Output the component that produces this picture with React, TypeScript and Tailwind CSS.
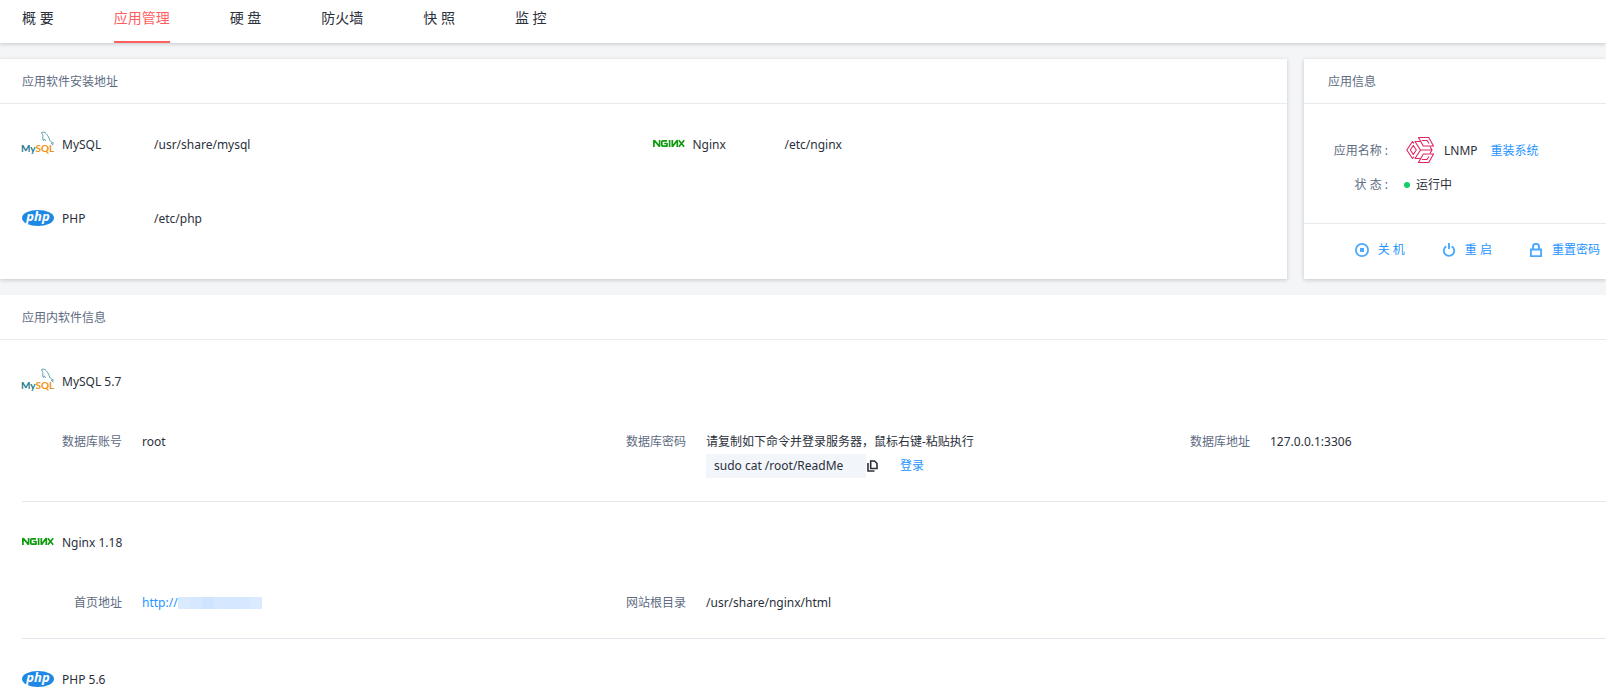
import { useState } from 'react'
import type { ReactNode } from 'react'

const tabs = ['概 要', '应用管理', '硬 盘', '防火墙', '快 照', '监 控']

function MysqlLogo() {
  return (
    <svg
      width="32"
      height="24"
      viewBox="0 2 32 24"
      className="shrink-0 overflow-visible"
      aria-hidden="true"
    >
      <g fontFamily="Lato, sans-serif" fontSize="10" fontWeight="700">
        <text x="-1" y="20.5" fill="#1f7a8c">My</text>
        <text x="13.5" y="20.5" fill="#f29111">SQL</text>
      </g>
      <path
        d="M19.5 1.500c1.600-.9 3.400-.2 4.600 1.100 2 2 3 4.500 3.700 6.800.6 1.200 2.200 1.800 3.700 2.600-1 .1-1.800.1-2.300.4.800.7 1.600 1.200 2.300 1.800M19.500 1.500c.2 1.300 1.300 2 1.400 3.200.1 1.500-.5 3.300.3 4.800.6-.2.900-.9 1.100-1.600.6.800.8 1.600 1.600 2.200"
        fill="none"
        stroke="#5f9fb0"
        strokeWidth="1"
      />
    </svg>
  )
}

function NginxLogo() {
  return (
    <svg width="32" height="24" viewBox="0 1 32 24" className="shrink-0" aria-hidden="true">
      <g fill="none" stroke="#109a10" strokeWidth="1.7" strokeLinejoin="round">
        <path d="M.9 15V8.500h.6l4.600 5.600h.5V8" />
        <path d="M14 8.800H9.800q-1 0-1 1v3.300q0 1 1 1H14v-2.600h-2.800" />
        <path d="M16.600 8v7" />
        <path d="M19.300 8v6.200h.5l4-5.500h.5V15" />
        <path d="M25.800 8.300l5.400 6.400M31.200 8.300l-5.400 6.400" />
      </g>
    </svg>
  )
}

function PhpLogo() {
  return (
    <svg width="32" height="24" viewBox="0 0 32 24" className="shrink-0" aria-hidden="true">
      <ellipse cx="16" cy="11" rx="16" ry="8" fill="#1e88e5" />
      <text
        x="16"
        y="14"
        fill="#fff"
        textAnchor="middle"
        fontFamily="'Open Sans', sans-serif"
        fontSize="13"
        fontStyle="italic"
        fontWeight="700"
      >
        php
      </text>
    </svg>
  )
}

function LnmpLogo() {
  return (
    <svg width="28" height="28" viewBox="0 1 28 28" className="shrink-0" aria-hidden="true">
      <g fill="none" stroke="#e0245e" strokeWidth="1.1" strokeLinejoin="round">
        {/* left face */}
        <path d="M8 7.500L6.500 5.500.8 14l5.700 8.500L8 20.500M7.300 9.500l3 4.500-3 4.500-3-4.500z" />
        {/* top face */}
        <path d="M12.500 1.500h10.300l4.700 8.500H17.300zM15.800 4.500h5.200l2 3" />
        {/* bottom face */}
        <path d="M12.500 26.500h10.300l4.700-8.500H17.300zM15.800 23.500h5.200l2-3" />
        {/* inner corner */}
        <path d="M14.500 5.500H9l5.500 8.500L9 22.500h5.500M14.500 14H26M24 10.500l2 3.500-2 3.500" />
      </g>
    </svg>
  )
}

function StopIcon() {
  return (
    <svg width="14" height="14" viewBox="0 0 14 14" aria-hidden="true">
      <circle cx="7" cy="7" r="6.1" fill="none" stroke="#4da9ff" strokeWidth="1.8" />
      <rect x="5" y="5" width="4" height="4" fill="#4da9ff" />
    </svg>
  )
}

function PowerIcon() {
  return (
    <svg width="14" height="14" viewBox="0 0 14 14" aria-hidden="true">
      <path
        d="M4.300 3.200a5.200 5.200 0 1 0 5.400 0M7 0v6"
        fill="none"
        stroke="#4da9ff"
        strokeWidth="1.9"
      />
    </svg>
  )
}

function LockIcon() {
  return (
    <svg width="14" height="14" viewBox="0 0 14 14" aria-hidden="true">
      <path
        d="M1.900 6.500h10.200v6.600H1.900zM4 6V3.800a3 3 0 0 1 6 0V6"
        fill="none"
        stroke="#4da9ff"
        strokeWidth="1.9"
      />
    </svg>
  )
}

function CopyIcon() {
  return (
    <svg width="11" height="12" viewBox="0 0 11 12" aria-hidden="true">
      <path
        d="M3.700 1h3.800L10 3.500V8.500H3.700zM1 3v8h6.500"
        fill="none"
        stroke="#2b303b"
        strokeWidth="1.6"
      />
    </svg>
  )
}

function CardTitle({ children }: { children: ReactNode }) {
  return (
    <h2 className="flex h-[45px] items-center border-b border-[#e8eaec] pt-0.5 text-[#5e6b82]">
      {children}
    </h2>
  )
}

function PathItem({ logo, name, path }: { logo: ReactNode; name: string; path: string }) {
  return (
    <div className="flex h-[74px] items-center">
      {logo}
      <span className="ml-2 w-[92px]">{name}</span>
      <span>{path}</span>
    </div>
  )
}

function Software({ logo, name, children }: { logo: ReactNode; name: string; children?: ReactNode }) {
  return (
    <section className="ml-[22px] border-b border-[#e4e8ee] pt-[29px] pb-[23px] last:border-b-0 last:pb-0">
      <h3 className="flex h-6 items-center gap-2">
        {logo}
        {name}
      </h3>
      {children && (
        <dl className="mt-9 grid grid-cols-[1fr_1fr_416px] pl-10 leading-6">{children}</dl>
      )}
    </section>
  )
}

function Field({ label, children }: { label: string; children: ReactNode }) {
  return (
    <div className="flex">
      <dt className="w-[60px] text-right text-[#5e6b82]">{label}</dt>
      <dd className="ml-5">{children}</dd>
    </div>
  )
}

const mask = [
  'bg-[#d9eaff]',
  'bg-[#d6e8ff]',
  'bg-[#cfe5ff]',
  'bg-[#d6e8ff]',
  'bg-[#d3e7ff]',
  'bg-[#d6e8ff]',
  'bg-[#dbebff]',
]

export default function App() {
  const [active, setActive] = useState('应用管理')
  const command = 'sudo cat /root/ReadMe'

  return (
    <div className="flex min-h-screen flex-col overflow-hidden bg-[#f3f5f7] font-['Noto_Sans','Noto_Sans_CJK_SC',sans-serif] text-xs text-[#2b303b]">
      <nav className="relative flex h-[43px] gap-[60px] bg-white pl-[22px] text-sm shadow-[0_1px_4px_rgba(0,21,41,0.2)]">
        {tabs.map((tab) => (
          <button
            key={tab}
            onClick={() => setActive(tab)}
            className={
              tab === active
                ? 'border-b-2 border-[#ff5f5f] pb-1.5 text-[#ff5f5f]'
                : 'border-b-2 border-transparent pb-1.5'
            }
          >
            {tab}
          </button>
        ))}
      </nav>

      <div className="mt-4 flex gap-[17px]">
        <section className="flex-1 bg-white shadow-[0_1px_4px_rgba(0,21,41,0.2)]">
          <div className="[&>h2]:pl-[22px]">
            <CardTitle>应用软件安装地址</CardTitle>
          </div>
          <div className="grid grid-cols-2 pt-1 pr-1 pb-[23px] pl-[22px]">
            <PathItem logo={<MysqlLogo />} name="MySQL" path="/usr/share/mysql" />
            <PathItem logo={<NginxLogo />} name="Nginx" path="/etc/nginx" />
            <PathItem logo={<PhpLogo />} name="PHP" path="/etc/php" />
          </div>
        </section>

        <section className="flex w-[302px] flex-col bg-white shadow-[0_1px_4px_rgba(0,21,41,0.2)]">
          <div className="[&>h2]:pl-6">
            <CardTitle>应用信息</CardTitle>
          </div>
          <dl className="flex-1 pt-[29px] pl-6">
            <div className="flex h-9 items-center">
              <dt className="w-[60px] text-right text-[#5e6b82]">应用名称 :</dt>
              <dd className="ml-[18px] flex items-center">
                <LnmpLogo />
                <span className="ml-2.5">LNMP</span>
                <a href="#reinstall" className="ml-[13px] text-[#1f94ff]">重装系统</a>
              </dd>
            </div>
            <div className="flex h-8 items-center">
              <dt className="w-[60px] text-right text-[#5e6b82]">状 态 :</dt>
              <dd className="ml-4 flex items-center gap-1.5">
                <span className="size-1.5 rounded-full bg-[#13ce66]" />
                运行中
              </dd>
            </div>
          </dl>
          <div className="flex h-14 items-center justify-end gap-[37px] border-t border-[#e8eaec] pr-1.5 pb-1 whitespace-nowrap text-[#1f94ff]">
            <button className="flex items-center gap-[9px]">
              <StopIcon />
              关 机
            </button>
            <button className="flex items-center gap-[9px]">
              <PowerIcon />
              重 启
            </button>
            <button className="flex items-center gap-[9px]">
              <LockIcon />
              重置密码
            </button>
          </div>
        </section>
      </div>

      <section className="mt-4 flex-1 bg-white">
        <div className="pb-px [&>h2]:pl-[22px]">
          <CardTitle>应用内软件信息</CardTitle>
        </div>
        <Software logo={<MysqlLogo />} name="MySQL 5.7">
          <Field label="数据库账号">root</Field>
          <Field label="数据库密码">
            <p>请复制如下命令并登录服务器，鼠标右键-粘贴执行</p>
            <div className="flex items-center">
              <code className="w-40 bg-[#f2f5fa] px-2 font-['Noto_Sans','Noto_Sans_CJK_SC',sans-serif]">
                {command}
              </code>
              <button
                aria-label="复制"
                className="ml-px"
                onClick={() => navigator.clipboard.writeText(command)}
              >
                <CopyIcon />
              </button>
              <a href="#login" className="ml-[22px] text-[#1f94ff]">登录</a>
            </div>
          </Field>
          <Field label="数据库地址">127.0.0.1:3306</Field>
        </Software>
        <Software logo={<NginxLogo />} name="Nginx 1.18">
          <Field label="首页地址">
            <a href="#home" className="flex items-center text-[#1f94ff]">
              http://
              <span className="flex">
                {mask.map((color, i) => (
                  <span key={i} className={`h-3 w-3 ${color}`} />
                ))}
              </span>
            </a>
          </Field>
          <Field label="网站根目录">/usr/share/nginx/html</Field>
        </Software>
        <Software logo={<PhpLogo />} name="PHP 5.6" />
      </section>
    </div>
  )
}
